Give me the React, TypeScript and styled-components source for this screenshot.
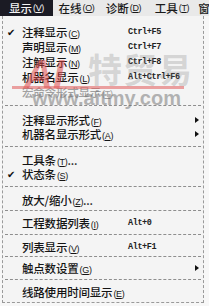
import React from "react";
import styled, { createGlobalStyle } from "styled-components";

const GlobalStyle = createGlobalStyle`
  html, body { margin: 0; padding: 0; background: #f7f7f7; }
  #root { width: 209px; height: 306px; overflow: hidden; }
`;

const Page = styled.div`
  position: relative;
  width: 209px;
  height: 306px;
  overflow: hidden;
  background: #f7f7f7;
  font-family: "Noto Sans CJK SC", "Liberation Sans", sans-serif;
  color: #151515;
`;

const MenuBar = styled.div`
  display: flex;
  align-items: stretch;
  height: 16px;
  background: #e9e9e9;
  white-space: nowrap;
  overflow: hidden;
`;

const BarItem = styled.div<{ $active?: boolean; $w: number }>`
  display: flex;
  align-items: center;
  justify-content: center;
  flex: 0 0 ${(p) => p.$w}px;
  font-size: 11.5px;
  font-weight: 500;
  line-height: 16px;
  background: ${(p) => (p.$active ? "#1b1b24" : "transparent")};
  color: ${(p) => (p.$active ? "#f4f4f4" : "#1a1a1a")};
`;

const Mn = styled.span`
  font-family: "Liberation Sans", sans-serif;
  font-size: 9px;
  letter-spacing: -0.3px;
  margin-left: 1px;
  u { text-decoration: underline; text-underline-offset: 1px; }
`;

const Dropdown = styled.div`
  margin-left: 2px;
  width: 202px;
  height: 287px;
  box-sizing: border-box;
  padding-top: 8px;
  border-left: 1px dashed #9a9a9a;
  border-right: 1px dashed #9a9a9a;
  border-bottom: 1px dashed #9a9a9a;
  background: #f4f4f4;
`;

const Row = styled.div<{ $disabled?: boolean; $h: number }>`
  display: grid;
  grid-template-columns: 19px 106px 1fr 8px;
  align-items: center;
  height: ${(p) => p.$h}px;
  font-size: 11.5px;
  font-weight: 500;
  color: ${(p) => (p.$disabled ? "#a0a0a0" : "#141414")};
  white-space: nowrap;
`;

const Check = styled.span`
  font-size: 10px;
  padding-left: 4px;
  font-family: "DejaVu Sans", sans-serif;
  color: #111;
`;

const Label = styled.span`
  letter-spacing: -0.2px;
`;

const Shortcut = styled.span`
  font-family: "Liberation Mono", monospace;
  font-size: 8.5px;
  font-weight: bold;
  letter-spacing: -0.4px;
  color: #222;
`;

const Arrow = styled.span`
  width: 0;
  height: 0;
  border-top: 3.5px solid transparent;
  border-bottom: 3.5px solid transparent;
  border-left: 4px solid #111;
`;

const Separator = styled.div<{ $h: number }>`
  height: ${(p) => p.$h}px;
  display: flex;
  align-items: center;
  padding: 0 2px;
  &::after {
    content: "";
    flex: 1;
    border-top: 1px dashed #8e8e8e;
  }
`;

const Watermark = styled.div`
  position: absolute;
  left: 0;
  top: 0;
  width: 209px;
  height: 306px;
  pointer-events: none;
`;

const WmAI = styled.span`
  position: absolute;
  left: 24px;
  top: 54px;
  font-family: "Liberation Sans", sans-serif;
  font-weight: bold;
  font-style: italic;
  font-size: 40px;
  line-height: 40px;
  color: rgba(222, 72, 72, 0.55);
`;

const WmCN = styled.span`
  position: absolute;
  left: 88px;
  top: 50px;
  font-size: 34px;
  line-height: 38px;
  font-weight: bold;
  letter-spacing: 1px;
  color: rgba(120, 120, 120, 0.26);
`;

const WmLine = styled.div`
  position: absolute;
  left: 12px;
  top: 86px;
  width: 172px;
  height: 3px;
  background: rgba(225, 90, 90, 0.55);
`;

const WmUrl = styled.span`
  position: absolute;
  left: 32px;
  top: 88px;
  font-family: "Liberation Sans", sans-serif;
  font-weight: bold;
  font-size: 20px;
  line-height: 20px;
  color: rgba(110, 110, 110, 0.5);
`;

type Item =
  | { sep: true; h: number }
  | {
      sep?: false;
      h: number;
      label: string;
      key: string;
      dots?: boolean;
      shortcut?: string;
      checked?: boolean;
      sub?: boolean;
      disabled?: boolean;
    };

const items: Item[] = [
  { h: 15, label: "注释显示", key: "C", shortcut: "Ctrl+F5", checked: true },
  { h: 15, label: "声明显示", key: "M", shortcut: "Ctrl+F7" },
  { h: 15, label: "注解显示", key: "N", shortcut: "Ctrl+F8" },
  { h: 15, label: "机器名显示", key: "L", shortcut: "Alt+Ctrl+F6" },
  { h: 15, label: "宏命令形式显示", key: "T", disabled: true },
  { sep: true, h: 13 },
  { h: 14, label: "注释显示形式", key: "F", sub: true },
  { h: 14, label: "机器名显示形式", key: "A", sub: true },
  { sep: true, h: 12 },
  { h: 14, label: "工具条", key: "T", dots: true },
  { h: 14, label: "状态条", key: "S", checked: true },
  { sep: true, h: 12 },
  { h: 14, label: "放大/缩小", key: "Z", dots: true },
  { sep: true, h: 9 },
  { h: 14, label: "工程数据列表", key: "I", shortcut: "Alt+0" },
  { sep: true, h: 10 },
  { h: 14, label: "列表显示", key: "V", shortcut: "Alt+F1" },
  { sep: true, h: 7 },
  { h: 14, label: "触点数设置", key: "G", sub: true },
  { sep: true, h: 10 },
  { h: 14, label: "线路使用时间显示", key: "E" },
];

const bar = [
  { label: "显示", key: "V", w: 53, active: true },
  { label: "在线", key: "O", w: 47 },
  { label: "诊断", key: "D", w: 47 },
  { label: "工具", key: "T", w: 50 },
  { label: "窗口", key: "W", w: 40 },
];

export default function App() {
  return (
    <>
      <GlobalStyle />
      <Page>
        <MenuBar>
          {bar.map((b, i) => (
            <BarItem key={i} $active={b.active} $w={b.w}>
              {b.label}
              <Mn>
                (<u>{b.key}</u>)
              </Mn>
            </BarItem>
          ))}
        </MenuBar>
        <Dropdown>
          {items.map((it, i) =>
            it.sep ? (
              <Separator key={i} $h={it.h} />
            ) : (
              <Row key={i} $h={it.h} $disabled={it.disabled}>
                <Check>{it.checked ? "✔" : ""}</Check>
                <Label>
                  {it.label}
                  <Mn>
                    (<u>{it.key}</u>)
                  </Mn>
                  {it.dots ? "..." : ""}
                </Label>
                <Shortcut>{it.shortcut ?? ""}</Shortcut>
                {it.sub ? <Arrow /> : <span />}
              </Row>
            )
          )}
        </Dropdown>
        <Watermark>
          <WmAI>AI</WmAI>
          <WmCN>特贸易</WmCN>
          <WmLine />
          <WmUrl>www.aitmy.com</WmUrl>
        </Watermark>
      </Page>
    </>
  );
}
